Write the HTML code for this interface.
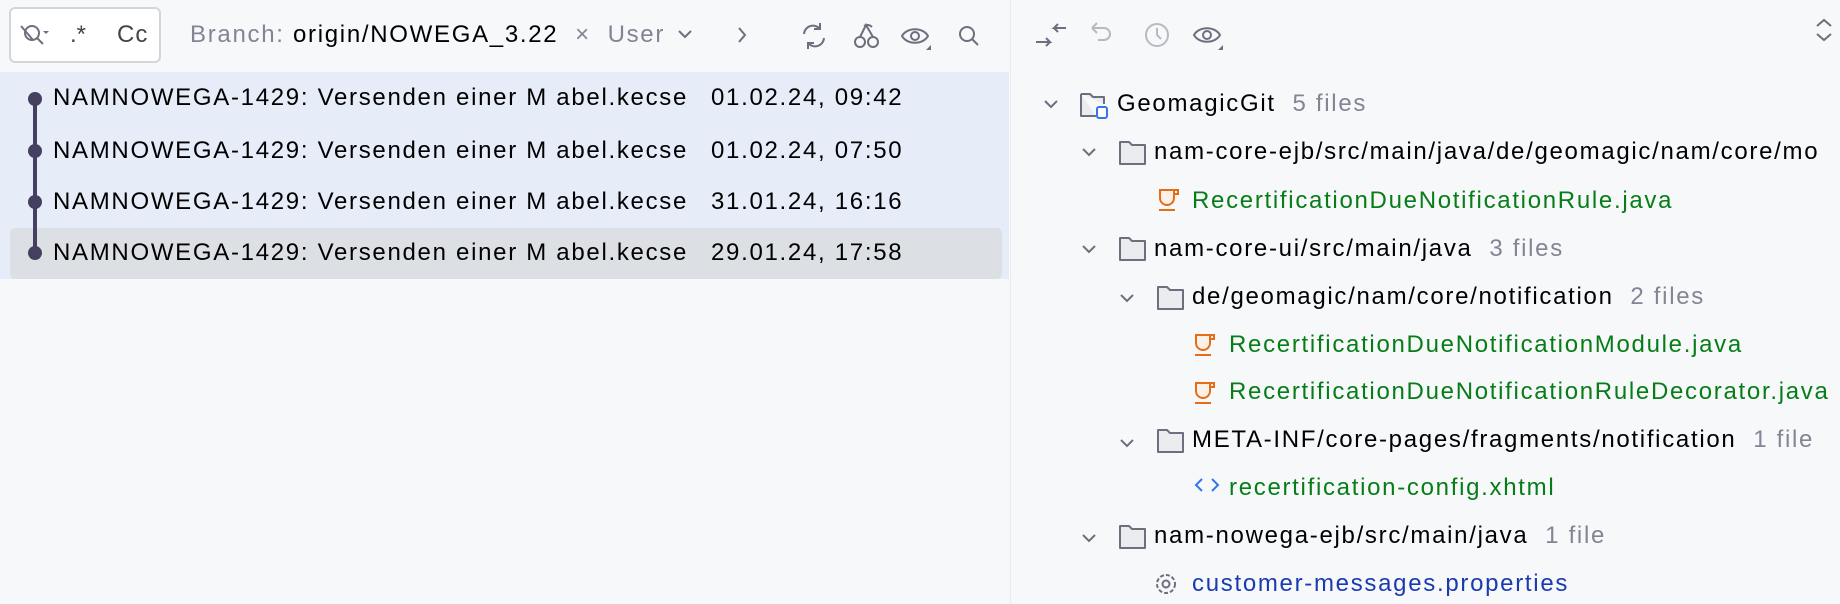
<!DOCTYPE html><html><head><style>
*{margin:0;padding:0;box-sizing:border-box}
body{width:1840px;height:604px;background:#f7f8fa;font-family:"Liberation Sans",sans-serif;font-size:24px;letter-spacing:1.7px;color:#000;position:relative;overflow:hidden}
.a{position:absolute;white-space:nowrap;line-height:28px}
.g{color:#818594}.gr{color:#067d17}.bl{color:#1a3bb0}
svg{position:absolute}
</style></head><body>
<div class="a" style="left:1010px;top:0;width:1px;height:604px;background:#ebecf0"></div>
<div class="a" style="left:0;top:72px;width:1009px;height:207px;background:#e6ecf8"></div>
<div class="a" style="left:10px;top:228px;width:992px;height:51px;background:#dcdfe4;border-radius:5px"></div>
<div class="a" style="left:9px;top:7px;width:152px;height:56px;border:2px solid #d3d5db;border-radius:6px;background:#fff"></div>
<svg style="left:18px;top:22px" width="36" height="26" viewBox="0 0 36 26"><circle cx="14" cy="11" r="7" fill="none" stroke="#6c707e" stroke-width="2"/><path d="M19 16l6 6M3 4l12 14" stroke="#6c707e" stroke-width="2" fill="none"/><path d="M25 9h6l-3 3z" fill="#6c707e"/></svg>
<div class="a" style="left:70px;top:21px;color:#444;letter-spacing:0">.*</div>
<div class="a" style="left:117px;top:21px;color:#444;letter-spacing:1px">Cc</div>
<div class="a" style="left:190px;top:21px"><span class="g">Branch:</span> origin/NOWEGA_3.22 <span class="g">&nbsp;×&nbsp;&nbsp;</span><span class="g">User</span></div>
<svg style="left:677px;top:26px" width="80" height="20"><path d="M2 5l6 6 6-6M62 2l6 7-6 7" stroke="#6c707e" stroke-width="2" fill="none"/></svg>
<svg style="left:798px;top:20px" width="200" height="32" viewBox="0 0 200 32">
<g stroke="#6c707e" stroke-width="2" fill="none">
<path d="M6 14a9 9 0 0 1 16-5M26 18a9 9 0 0 1-16 5M22 3v6h-6M10 29v-6h6"/>
<circle cx="62" cy="22" r="5"/><circle cx="75" cy="22" r="5"/><path d="M62 17l6-12 7 12M66 6c3-2 6-1 8 1"/>
<path d="M104 16c5-9 21-9 26 0c-5 9-21 9-26 0z"/><circle cx="117" cy="16" r="4"/>
<circle cx="169" cy="14" r="7"/><path d="M174 19l6 6"/></g>
<path d="M128 30l5-5v5z" fill="#6c707e"/></svg>
<!-- commits -->
<div class="a" style="left:33px;top:98px;width:4px;height:155px;background:#45405f"></div>
<div class="a" style="left:28px;top:92px;width:14px;height:14px;border-radius:7px;background:#45405f"></div>
<div class="a" style="left:28px;top:144px;width:14px;height:14px;border-radius:7px;background:#45405f"></div>
<div class="a" style="left:28px;top:195px;width:14px;height:14px;border-radius:7px;background:#45405f"></div>
<div class="a" style="left:28px;top:246px;width:14px;height:14px;border-radius:7px;background:#45405f"></div>
<div class="a" style="left:53px;top:84px">NAMNOWEGA-1429: Versenden einer M abel.kecse</div><div class="a" style="left:711px;top:84px">01.02.24, 09:42</div>
<div class="a" style="left:53px;top:137px">NAMNOWEGA-1429: Versenden einer M abel.kecse</div><div class="a" style="left:711px;top:137px">01.02.24, 07:50</div>
<div class="a" style="left:53px;top:188px">NAMNOWEGA-1429: Versenden einer M abel.kecse</div><div class="a" style="left:711px;top:188px">31.01.24, 16:16</div>
<div class="a" style="left:53px;top:239px">NAMNOWEGA-1429: Versenden einer M abel.kecse</div><div class="a" style="left:711px;top:239px">29.01.24, 17:58</div>
<!-- right toolbar -->
<svg style="left:1034px;top:18px" width="200" height="34" viewBox="0 0 200 34"><g stroke="#6c707e" stroke-width="2" fill="none">
<path d="M2 24h14l-4-4M16 24l-4 4M32 10h-12l4-4M20 10l4 4"/>
<g stroke="#b8bac2"><path d="M58 10h12a6 6 0 0 1 0 12h-6M58 10l5-5M58 10l5 5"/><circle cx="123" cy="17" r="11"/><path d="M123 10v7l4 4"/></g>
<path d="M160 17c5-9 21-9 26 0c-5 9-21 9-26 0z"/><circle cx="173" cy="17" r="4"/></g>
<path d="M184 32l5-5v5z" fill="#6c707e"/></svg>
<svg style="left:1815px;top:18px" width="20" height="24"><path d="M2 8l7-6 7 6M2 16l7 6 7-6" stroke="#6c707e" stroke-width="2" fill="none"/></svg>
<!-- tree -->
<svg style="left:0;top:0" width="1840" height="604"><g stroke="#6c707e" stroke-width="2" fill="none">
<path d="M1045 101l6 6 6-6M1083 149l6 6 6-6M1083 246l6 6 6-6M1121 295l6 6 6-6M1121 440l6 6 6-6M1083 535l6 6 6-6"/>
</g>
<g stroke="#6c707e" stroke-width="2" fill="#ebecf0" stroke-linejoin="round">
<path d="M1081 94h9l3 3h11v7M1096 116h-15v-22"/>
<path d="M1120 142h9l3 3h13v19h-25z"/><path d="M1120 238h9l3 3h13v19h-25z"/><path d="M1158 287h9l3 3h13v19h-25z"/><path d="M1158 430h9l3 3h13v19h-25z"/><path d="M1120 526h9l3 3h13v19h-25z"/>
</g>
<rect x="1097" y="107" width="10" height="11" rx="2" fill="#fff" stroke="#3574f0" stroke-width="2"/>
<g stroke="#e66d17" stroke-width="2" fill="#fef0e6">
<path d="M1160 190h14v8a7 7 0 0 1-14 0zM1174 190h4v4h-4M1159 210h16"/>
<path d="M1196 335h14v8a7 7 0 0 1-14 0zM1210 335h4v4h-4M1195 355h16"/>
<path d="M1196 383h14v8a7 7 0 0 1-14 0zM1210 383h4v4h-4M1195 403h16"/>
</g>
<path d="M1202 479l-6 6 6 6M1212 479l6 6-6 6" stroke="#3574f0" stroke-width="2" fill="none"/>
<circle cx="1166" cy="584" r="9" fill="none" stroke="#6c707e" stroke-width="2" stroke-dasharray="4 2"/><circle cx="1166" cy="584" r="3.5" fill="none" stroke="#6c707e" stroke-width="2"/>
</svg>
<div class="a" style="left:1117px;top:90px">GeomagicGit <span class="g">&nbsp;5 files</span></div>
<div class="a" style="left:1154px;top:138px">nam-core-ejb/src/main/java/de/geomagic/nam/core/mo</div>
<div class="a gr" style="left:1192px;top:187px">RecertificationDueNotificationRule.java</div>
<div class="a" style="left:1154px;top:235px">nam-core-ui/src/main/java <span class="g">&nbsp;3 files</span></div>
<div class="a" style="left:1192px;top:283px">de/geomagic/nam/core/notification <span class="g">&nbsp;2 files</span></div>
<div class="a gr" style="left:1229px;top:331px">RecertificationDueNotificationModule.java</div>
<div class="a gr" style="left:1229px;top:378px">RecertificationDueNotificationRuleDecorator.java</div>
<div class="a" style="left:1192px;top:426px">META-INF/core-pages/fragments/notification <span class="g">&nbsp;1 file</span></div>
<div class="a gr" style="left:1229px;top:474px">recertification-config.xhtml</div>
<div class="a" style="left:1154px;top:522px">nam-nowega-ejb/src/main/java <span class="g">&nbsp;1 file</span></div>
<div class="a bl" style="left:1192px;top:570px">customer-messages.properties</div>
</body></html>
